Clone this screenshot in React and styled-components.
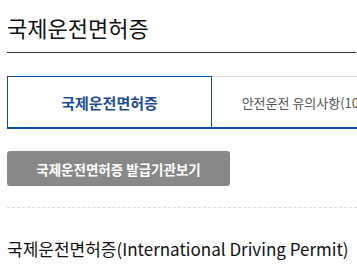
import React from "react";
import styled, { createGlobalStyle } from "styled-components";

const GlobalStyle = createGlobalStyle`
  html, body {
    margin: 0;
    padding: 0;
    background: #fff;
    overflow: hidden;
  }
  body {
    font-family: "Noto Sans CJK KR", "Noto Sans", sans-serif;
  }
`;

const Page = styled.div`
  width: 600px;
  padding: 0 0 0 7px;
`;

const Title = styled.h2`
  margin: 0;
  padding-top: 12px;
  height: 53px;
  box-sizing: border-box;
  font-size: 22px;
  font-weight: 400;
  line-height: 30px;
  color: #111;
  border-bottom: 1px solid #333;
  width: 349px;
`;

const Tabs = styled.ul`
  display: flex;
  margin: 23px 0 0;
  padding: 0;
  list-style: none;
`;

const Tab = styled.li`
  width: 205px;
  height: 53px;
  box-sizing: border-box;
  display: flex;
  align-items: center;
  justify-content: center;
  font-size: ${(p) => (p.$active ? "15px" : "13px")};
  white-space: nowrap;
  border-top: 1px solid ${(p) => (p.$active ? "#0b4ea2" : "#ddd")};
  border-bottom: 2px solid #0b4ea2;
  border-left: ${(p) => (p.$active ? "1px solid #0b4ea2" : "none")};
  border-right: ${(p) => (p.$active ? "1px solid #0b4ea2" : "none")};
  color: ${(p) => (p.$active ? "#1d4b9c" : "#555")};
  font-weight: ${(p) => (p.$active ? 700 : 400)};
  padding-top: 1px;
`;

const Button = styled.button`
  display: block;
  margin: 22px 0 0;
  width: 223px;
  height: 35px;
  border: none;
  border-radius: 3px;
  background: #888;
  color: #fff;
  font-family: inherit;
  font-size: 13.5px;
  font-weight: 700;
  padding: 0;
`;

const Divider = styled.hr`
  margin: 21px 0 0;
  border: none;
  border-top: 1px dashed #ddd;
  width: 350px;
`;

const SubTitle = styled.h3`
  margin: 0;
  padding-top: 26px;
  font-size: 17px;
  font-weight: 400;
  line-height: 30px;
  color: #111;
  white-space: nowrap;
`;

export default function App() {
  return (
    <>
      <GlobalStyle />
      <Page>
        <Title>국제운전면허증</Title>
        <Tabs>
          <Tab $active>국제운전면허증</Tab>
          <Tab>안전운전 유의사항(10가지)</Tab>
        </Tabs>
        <Button>국제운전면허증 발급기관보기</Button>
        <Divider />
        <SubTitle>국제운전면허증(International Driving Permit)</SubTitle>
      </Page>
    </>
  );
}
